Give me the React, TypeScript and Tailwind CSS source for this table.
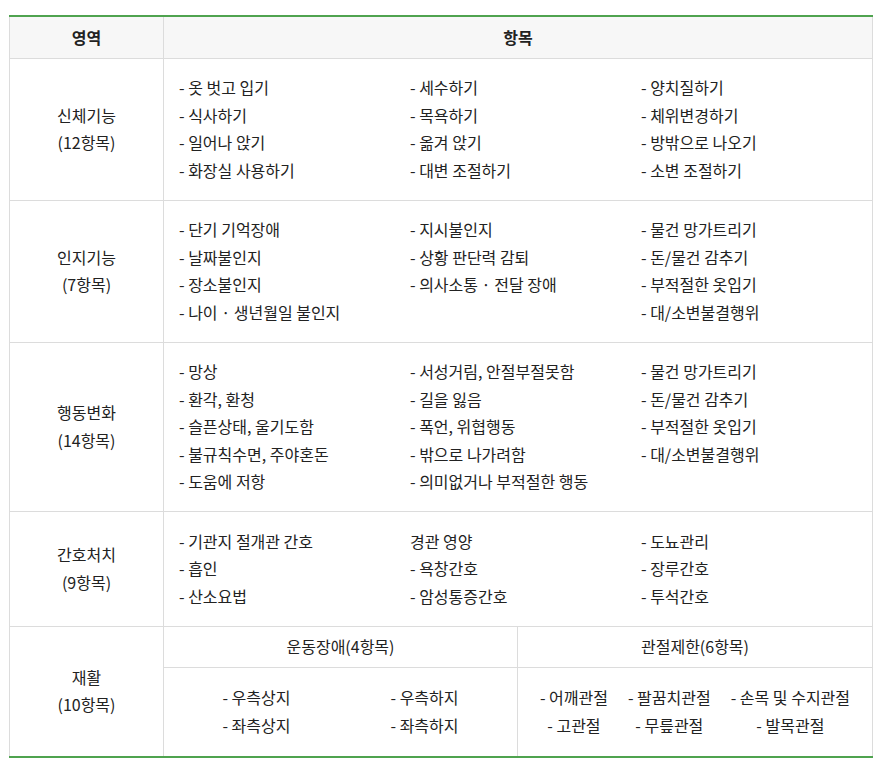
const rows: { name: string; count: string; cols: string[][] }[] = [
  {
    name: "신체기능",
    count: "(12항목)",
    cols: [
      ["- 옷 벗고 입기", "- 식사하기", "- 일어나 앉기", "- 화장실 사용하기"],
      ["- 세수하기", "- 목욕하기", "- 옮겨 앉기", "- 대변 조절하기"],
      ["- 양치질하기", "- 체위변경하기", "- 방밖으로 나오기", "- 소변 조절하기"],
    ],
  },
  {
    name: "인지기능",
    count: "(7항목)",
    cols: [
      ["- 단기 기억장애", "- 날짜불인지", "- 장소불인지", "- 나이 · 생년월일 불인지"],
      ["- 지시불인지", "- 상황 판단력 감퇴", "- 의사소통 · 전달 장애"],
      ["- 물건 망가트리기", "- 돈/물건 감추기", "- 부적절한 옷입기", "- 대/소변불결행위"],
    ],
  },
  {
    name: "행동변화",
    count: "(14항목)",
    cols: [
      ["- 망상", "- 환각, 환청", "- 슬픈상태, 울기도함", "- 불규칙수면, 주야혼돈", "- 도움에 저항"],
      ["- 서성거림, 안절부절못함", "- 길을 잃음", "- 폭언, 위협행동", "- 밖으로 나가려함", "- 의미없거나 부적절한 행동"],
      ["- 물건 망가트리기", "- 돈/물건 감추기", "- 부적절한 옷입기", "- 대/소변불결행위"],
    ],
  },
  {
    name: "간호처치",
    count: "(9항목)",
    cols: [
      ["- 기관지 절개관 간호", "- 흡인", "- 산소요법"],
      ["경관 영양", "- 욕창간호", "- 암성통증간호"],
      ["- 도뇨관리", "- 장루간호", "- 투석간호"],
    ],
  },
];

const cell = "border border-[#dcdcdc]";

export default function App() {
  return (
    <div className="min-h-screen bg-white pl-[9px] pt-[15px] font-['Noto_Sans_CJK_KR',sans-serif] text-[16px] leading-[27.5px] text-[#222]">
      <table className="w-[864px] border-collapse border-t-2 border-b-2 border-t-[#4fa34f] border-b-[#4fa34f]">
        <thead>
          <tr className="bg-[#f7f7f7]">
            <th className={`${cell} h-[42px] w-[154px] border-t-0 font-semibold`}>영역</th>
            <th className={`${cell} border-t-0 font-semibold`} colSpan={2}>항목</th>
          </tr>
        </thead>
        <tbody>
          {rows.map((r) => (
            <tr key={r.name}>
              <td className={`${cell} text-center`}>
                <div>{r.name}</div>
                <div>{r.count}</div>
              </td>
              <td className={`${cell} py-[15.5px] pl-[15px]`} colSpan={2}>
                <div className="grid grid-cols-[231px_231px_231px]">
                  {r.cols.map((col, i) => (
                    <div key={i}>
                      {col.map((t) => (
                        <div key={t} className="whitespace-nowrap">{t}</div>
                      ))}
                    </div>
                  ))}
                </div>
              </td>
            </tr>
          ))}
          <tr>
            <td className={`${cell} text-center`} rowSpan={2}>
              <div>재활</div>
              <div>(10항목)</div>
            </td>
            <td className={`${cell} h-[41px] w-[354px] text-center`}>운동장애(4항목)</td>
            <td className={`${cell} text-center`}>관절제한(6항목)</td>
          </tr>
          <tr>
            <td className={`${cell} py-[16.5px]`}>
              <div className="flex justify-center">
                <div className="grid grid-cols-[auto_auto] justify-items-center">
                  {["- 우측상지", "- 우측하지", "- 좌측상지", "- 좌측하지"].map((t) => (
                    <div key={t} className="whitespace-nowrap px-[50px]">{t}</div>
                  ))}
                </div>
              </div>
            </td>
            <td className={`${cell} py-[16.5px]`}>
              <div className="flex justify-center">
                <div className="grid grid-cols-[auto_auto_auto] justify-items-center">
                  {["- 어깨관절", "- 팔꿈치관절", "- 손목 및 수지관절", "- 고관절", "- 무릎관절", "- 발목관절"].map((t) => (
                    <div key={t} className="whitespace-nowrap px-[10px]">{t}</div>
                  ))}
                </div>
              </div>
            </td>
          </tr>
        </tbody>
      </table>
    </div>
  );
}
